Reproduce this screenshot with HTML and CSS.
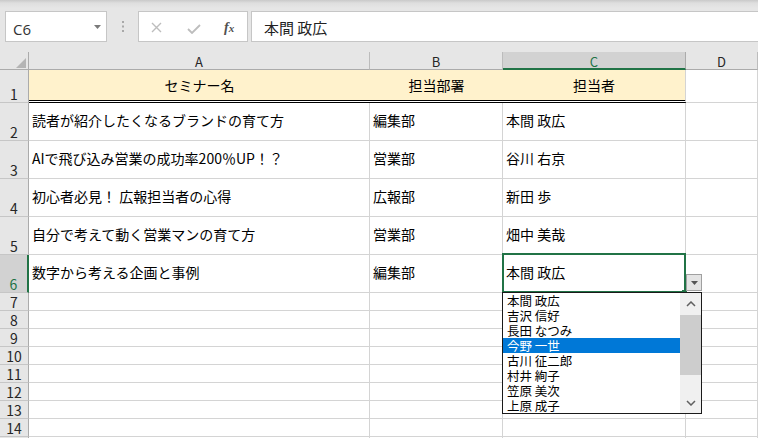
FILE: index.html
```html
<!DOCTYPE html>
<html lang="ja">
<head>
<meta charset="utf-8">
<title>Excel</title>
<link rel="stylesheet" href="styles.css">
</head>
<body>
<div class="toolbar">
  <div class="namebox">
    <span class="nb-text">C6</span>
    <svg class="nb-arrow" width="7" height="4" viewBox="0 0 7 4"><path d="M0 0H7L3.5 4Z" fill="#7a7a7a"/></svg>
  </div>
  <svg class="dots" width="2" height="11" viewBox="0 0 2 11"><rect x="0" y="0" width="2" height="2" fill="#a8a8a8"/><rect x="0" y="4.5" width="2" height="2" fill="#a8a8a8"/><rect x="0" y="9" width="2" height="2" fill="#a8a8a8"/></svg>
  <div class="fxbox">
    <svg class="ic-x" width="11" height="11" viewBox="0 0 11 11"><path d="M1 1L10 10M10 1L1 10" stroke="#bdbdbd" stroke-width="1.4" fill="none"/></svg>
    <svg class="ic-check" width="14" height="10" viewBox="0 0 14 10"><path d="M1 5L5 9L13 1" stroke="#bdbdbd" stroke-width="1.8" fill="none"/></svg>
    <span class="fx">f<span class="fx-x">x</span></span>
  </div>
  <div class="formula">本間 政広</div>
</div>

<div class="sheet">
  <div class="corner"><svg width="10" height="10" viewBox="0 0 10 10"><path d="M10 0V10H0Z" fill="#b4b4b4"/></svg></div>
  <div class="ch">A</div>
  <div class="ch">B</div>
  <div class="ch ch-sel">C</div>
  <div class="ch">D</div>

  <div class="rh">1</div>
  <div class="c hdr hdr-mid">セミナー名</div>
  <div class="c hdr hdr-mid">担当部署</div>
  <div class="c hdr">担当者</div>
  <div class="c"></div>

  <div class="rh">2</div>
  <div class="c">読者が紹介したくなるブランドの育て方</div>
  <div class="c">編集部</div>
  <div class="c">本間 政広</div>
  <div class="c"></div>

  <div class="rh">3</div>
  <div class="c">AIで飛び込み営業の成功率200％UP！？</div>
  <div class="c">営業部</div>
  <div class="c">谷川 右京</div>
  <div class="c"></div>

  <div class="rh">4</div>
  <div class="c">初心者必見！ 広報担当者の心得</div>
  <div class="c">広報部</div>
  <div class="c">新田 歩</div>
  <div class="c"></div>

  <div class="rh">5</div>
  <div class="c">自分で考えて動く営業マンの育て方</div>
  <div class="c">営業部</div>
  <div class="c">畑中 美哉</div>
  <div class="c"></div>

  <div class="rh rh-sel">6</div>
  <div class="c">数字から考える企画と事例</div>
  <div class="c">編集部</div>
  <div class="c">本間 政広</div>
  <div class="c"></div>

  <div class="rh">7</div><div class="c"></div><div class="c"></div><div class="c"></div><div class="c"></div>
  <div class="rh">8</div><div class="c"></div><div class="c"></div><div class="c"></div><div class="c"></div>
  <div class="rh">9</div><div class="c"></div><div class="c"></div><div class="c"></div><div class="c"></div>
  <div class="rh">10</div><div class="c"></div><div class="c"></div><div class="c"></div><div class="c"></div>
  <div class="rh">11</div><div class="c"></div><div class="c"></div><div class="c"></div><div class="c"></div>
  <div class="rh">12</div><div class="c"></div><div class="c"></div><div class="c"></div><div class="c"></div>
  <div class="rh">13</div><div class="c"></div><div class="c"></div><div class="c"></div><div class="c"></div>
  <div class="rh">14</div><div class="c"></div><div class="c"></div><div class="c"></div><div class="c"></div>
  <div class="rh"></div><div class="c"></div><div class="c"></div><div class="c"></div><div class="c"></div>

  <div class="sel"></div>
  <div class="fill-handle"></div>
  <div class="dd-btn"><svg width="7" height="4" viewBox="0 0 7 4"><path d="M0 0H7L3.5 4Z" fill="#555"/></svg></div>
  <div class="dd-list">
    <div class="dd-items">
      <div class="dd-item">本間 政広</div>
      <div class="dd-item">吉沢 信好</div>
      <div class="dd-item">長田 なつみ</div>
      <div class="dd-item dd-active">今野 一世</div>
      <div class="dd-item">古川 征二郎</div>
      <div class="dd-item">村井 絢子</div>
      <div class="dd-item">笠原 美次</div>
      <div class="dd-item">上原 成子</div>
    </div>
    <div class="sb">
      <div class="sb-btn"><svg width="10" height="6" viewBox="0 0 10 6"><path d="M1 5L5 1L9 5" stroke="#606060" stroke-width="1.5" fill="none"/></svg></div>
      <div class="sb-thumb"></div>
      <div class="sb-space"></div>
      <div class="sb-btn"><svg width="10" height="6" viewBox="0 0 10 6"><path d="M1 1L5 5L9 1" stroke="#606060" stroke-width="1.5" fill="none"/></svg></div>
    </div>
  </div>
</div>
</body>
</html>
```

FILE: styles.css
```css
html, body {
  margin: 0;
  padding: 0;
}
body {
  width: 758px;
  height: 438px;
  overflow: hidden;
  background: #ffffff;
  font-family: "Noto Sans CJK JP", "Noto Sans", sans-serif;
  color: #000;
}

/* ---------- formula bar ---------- */
.toolbar {
  height: 52px;
  box-sizing: border-box;
  padding: 11px 0 0 5px;
  display: flex;
  align-items: flex-start;
  background: linear-gradient(to bottom, #c9c9c9 0px, #dedede 3px, #e6e6e6 8px, #e6e6e6 100%);
}
.namebox {
  width: 102px;
  height: 31px;
  box-sizing: border-box;
  border: 1px solid #c6c6c6;
  background: #fff;
  display: flex;
  align-items: center;
  padding: 4px 5px 0 7px;
}
.nb-text {
  font-family: "Open Sans", "Noto Sans", sans-serif;
  font-size: 15px;
  color: #333;
}
.nb-arrow {
  margin-left: auto;
  margin-top: -4px;
}
.dots {
  margin: 10px 0 0 15px;
}
.fxbox {
  margin-left: 14px;
  width: 110px;
  height: 31px;
  box-sizing: border-box;
  border: 1px solid #c6c6c6;
  background: #fff;
  display: flex;
  align-items: center;
  padding: 2px 0 0 12px;
}
.ic-check {
  margin-left: 25px;
  margin-top: 2px;
}
.fx {
  margin-left: 23px;
  font-family: "Liberation Serif", serif;
  font-style: italic;
  font-weight: bold;
  font-size: 14px;
  color: #505050;
  line-height: 1;
}
.fx-x {
  font-size: 11px;
}
.formula {
  margin-left: 3px;
  margin-right: -3px;
  flex: 1;
  height: 31px;
  box-sizing: border-box;
  border: 1px solid #c6c6c6;
  background: #fff;
  display: flex;
  align-items: center;
  padding: 2px 0 0 12px;
  font-size: 15px;
  color: #222;
}

/* ---------- sheet grid ---------- */
.sheet {
  position: relative;
  display: grid;
  grid-template-columns: 29px 341px 133px 183px 72px;
  grid-template-rows: 18px 33px 38px 38px 38px 38px 38px;
  grid-auto-rows: 18px;
}
.sheet > div {
  box-sizing: border-box;
}
.corner {
  background: #e6e6e6;
  border-right: 1px solid #ababab;
  border-bottom: 1px solid #ababab;
  display: flex;
  align-items: flex-end;
  justify-content: flex-end;
  padding: 0 2px 1px 0;
}
.ch {
  background: #e6e6e6;
  border-right: 1px solid #bcbcbc;
  border-bottom: 1px solid #ababab;
  display: flex;
  align-items: center;
  justify-content: center;
  font-size: 13px;
  line-height: 1;
  padding-top: 2px;
  color: #262626;
}
.ch-sel {
  background: #d2d2d2;
  color: #217346;
  border-bottom: 2px solid #217346;
  border-right-color: #ababab;
  padding-top: 3px;
}
.rh {
  background: #e6e6e6;
  border-right: 1px solid #ababab;
  border-bottom: 1px solid #c6c6c6;
  display: flex;
  align-items: flex-end;
  justify-content: center;
  font-size: 14px;
  line-height: 16px;
  color: #262626;
}
.rh-sel {
  background: #d2d2d2;
  color: #217346;
  border-right: 2px solid #217346;
}
.c {
  border-right: 1px solid #d4d4d4;
  border-bottom: 1px solid #d4d4d4;
  display: flex;
  align-items: center;
  padding: 0 3px 3px 3px;
  font-size: 14px;
  white-space: nowrap;
  overflow: hidden;
  color: #000;
}
.hdr {
  background: #fff2cc;
  background-clip: padding-box;
  border-bottom: 3px double #000;
  justify-content: center;
  padding: 0 3px;
}
.hdr-mid {
  border-right: 0;
}

/* ---------- selection & dropdown overlays ---------- */
.sel {
  position: absolute;
  left: 502px;
  top: 201px;
  width: 184px;
  height: 40px;
  border: 2px solid #217346;
}
.fill-handle {
  position: absolute;
  left: 682px;
  top: 238px;
  width: 5px;
  height: 5px;
  background: #217346;
}
.dd-btn {
  position: absolute;
  left: 686px;
  top: 222px;
  width: 16px;
  height: 17px;
  border: 1px solid #a0a0a0;
  background: #e4e4e4;
  display: flex;
  align-items: center;
  justify-content: center;
}
.dd-list {
  position: absolute;
  left: 502px;
  top: 240px;
  width: 200px;
  height: 122px;
  border: 1px solid #1a1a1a;
  background: #fff;
  display: flex;
}
.dd-items {
  width: 177px;
}
.dd-item {
  height: 15px;
  line-height: 15px;
  padding-left: 4px;
  font-size: 12.5px;
  white-space: nowrap;
  color: #000;
}
.dd-active {
  background: #0078d7;
  color: #fff;
}
.sb {
  flex: 1;
  background: #f0f0f0;
  display: flex;
  flex-direction: column;
}
.sb-btn {
  height: 21px;
  display: flex;
  align-items: center;
  justify-content: center;
}
.sb-thumb {
  margin-top: 1px;
  height: 60px;
  background: #cdcdcd;
}
.sb-space {
  flex: 1;
}
```
